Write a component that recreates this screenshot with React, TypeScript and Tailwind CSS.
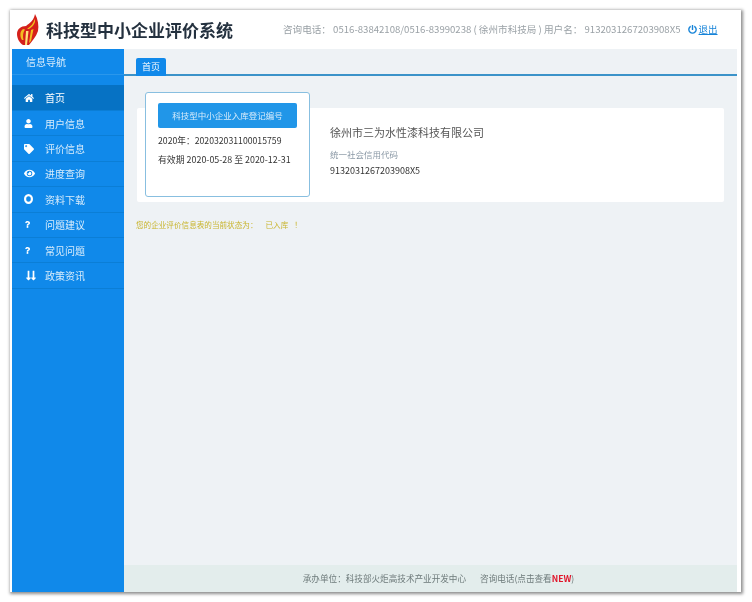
import { FaHome, FaUser, FaTag, FaEye, FaQuestion, FaPowerOff, FaLongArrowAltDown } from "react-icons/fa";
import type { ReactNode } from "react";

const Ring = () => (
  <svg width="10" height="12" viewBox="0 0 10 12"><ellipse cx="4.5" cy="6" rx="3.4" ry="3.9" fill="none" stroke="white" strokeWidth="2.2" /></svg>
);
const Arrows = () => (
  <span className="flex -space-x-[6px] -ml-[1px]"><FaLongArrowAltDown size={11} /><FaLongArrowAltDown size={11} /></span>
);

const items: { icon: ReactNode; label: string }[] = [
  { icon: <FaUser size={9} />, label: "用户信息" },
  { icon: <FaTag size={10} />, label: "评价信息" },
  { icon: <FaEye size={11} />, label: "进度查询" },
  { icon: <Ring />, label: "资料下载" },
  { icon: <FaQuestion size={7} />, label: "问题建议" },
  { icon: <FaQuestion size={7} />, label: "常见问题" },
  { icon: <Arrows />, label: "政策资讯" },
];

const Logo = () => (
  <svg width="24" height="33" viewBox="0 0 24 33" className="shrink-0">
    <path d="M19 1 C18 7 14 10 10 13 C5 13 1 16 1 21 C1 26 4 30 7 32 L13 32 C16 28 20 24 22 18 C23 13 22 6 19 1 Z" fill="#d5211b" />
    <path d="M18.5 6 C18 10 15 13 11 16 L13 16 C16 14 18 12 19 9 C19 8 19 7 18.5 6 Z" fill="#f2bd1f" />
    <path d="M7 16 C4 18 3.5 23 6 27 L7.5 27 C6.5 23 7 19 9 16.5 Z" fill="#f2bd1f" />
    <path d="M10 18 L9 32 L11 32 L12.5 18 Z" fill="#ffe27a" />
    <path d="M15 17 L13 30 L15 28 L17.5 16 Z" fill="#f2bd1f" />
  </svg>
);

export default function App() {
  return (
    <div className="w-[752px] h-[602px] bg-white pl-[10px] pt-[10px] overflow-hidden font-['Noto_Sans_CJK_SC','Noto_Sans',sans-serif] blur-[0.4px]">
      <div className="w-[731px] h-[582px] bg-white pl-[2px] pr-[4px] flex flex-col shadow-[1px_1px_3px_1px_rgba(0,0,0,0.45)]">
        <header className="h-[39px] shrink-0 flex items-center -ml-[2px] pl-[6px] bg-white">
          <Logo />
          <span className="ml-[6px] text-[17px] font-bold leading-none text-[#24313f] whitespace-nowrap">科技型中小企业评价系统</span>
          <span className="ml-[50px] text-[9.6px] text-[#9aa1a6] whitespace-nowrap">咨询电话： 0516-83842108/0516-83990238 ( 徐州市科技局 ) 用户名： 9132031267203908X5</span>
          <FaPowerOff size={9} className="ml-[7px] shrink-0 text-[#1583d8]" />
          <span className="ml-[2px] text-[9.5px] text-[#1583d8] underline whitespace-nowrap">退出</span>
        </header>
        <div className="flex-1 flex min-h-0">
          <aside className="w-[112px] shrink-0 bg-[#1089ea] text-white">
            <div className="h-[26px] flex items-center pl-[14px] text-[10px] text-[#d8ecfb] border-b border-[#2a97ec]">信息导航</div>
            <div className="h-[10px]" />
            <div className="h-[26px] flex items-center bg-[#0672c4] text-[10px] border-b border-[#0b7ed6]">
              <span className="w-[33px] pl-[12px] flex"><FaHome size={10} /></span>
              <span>首页</span>
            </div>
            {items.map((it) => (
              <div key={it.label} className="h-[25.4px] flex items-center text-[10px] text-[#d8ecfb] border-b border-[#0b7ed6]">
                <span className="w-[33px] pl-[12px] flex items-center text-white">{it.icon}</span>
                <span>{it.label}</span>
              </div>
            ))}
          </aside>
          <main className="flex-1 min-w-0 bg-[#eef2f5] flex flex-col">
            <div className="h-[27px] pt-[9px] pl-[12px] border-b-[2px] border-[#3b93c9] flex shrink-0">
              <div className="w-[30px] h-[18px] bg-[#1089ea] rounded-t-[2px] text-white text-[9px] flex items-center justify-center">首页</div>
            </div>
            <div className="ml-[13px] mr-[13px] mt-[32px] h-[94px] bg-white rounded-[2px] flex shrink-0">
              <div className="ml-[8px] -mt-[16px] w-[165px] h-[105px] bg-white border-[1.5px] border-[#88bfe0] rounded-[3px] pl-[12px] pt-[10px] shrink-0">
                <div className="w-[139px] h-[25px] bg-[#2196e8] rounded-[2px] text-[#d8ecfb] text-[8.5px] flex items-center justify-center whitespace-nowrap">科技型中小企业入库登记编号</div>
                <div className="mt-[6px] text-[8.7px] leading-[13px] text-[#333] whitespace-nowrap">2020年：202032031100015759</div>
                <div className="mt-[6px] text-[8.9px] leading-[13px] text-[#333] whitespace-nowrap">有效期 2020-05-28 至 2020-12-31</div>
              </div>
              <div className="ml-[20px] pt-[15px]">
                <div className="text-[11px] leading-[18px] text-[#555]">徐州市三为水性漆科技有限公司</div>
                <div className="mt-[7px] text-[8.5px] leading-[12px] text-[#8a98a5]">统一社会信用代码</div>
                <div className="mt-[5px] text-[9px] leading-[12px] text-[#333]">9132031267203908X5</div>
              </div>
            </div>
            <div className="ml-[12px] mt-[16px] flex text-[7.6px] leading-[14px] text-[#c9b52e] whitespace-nowrap">
              <span>您的企业评价信息表的当前状态为：</span>
              <span className="ml-[8px]">已入库</span>
              <span className="ml-[6px]">！</span>
            </div>
            <div className="flex-1" />
            <footer className="h-[27px] shrink-0 bg-[#e3edec] flex items-center justify-center pl-[16px] text-[8.6px] text-[#6d7a7a] whitespace-nowrap">
              <span>承办单位：科技部火炬高技术产业开发中心</span>
              <span className="ml-[14px]">咨询电话(点击查看<b className="text-[#e0162b]">NEW</b>)</span>
            </footer>
          </main>
        </div>
      </div>
    </div>
  );
}
